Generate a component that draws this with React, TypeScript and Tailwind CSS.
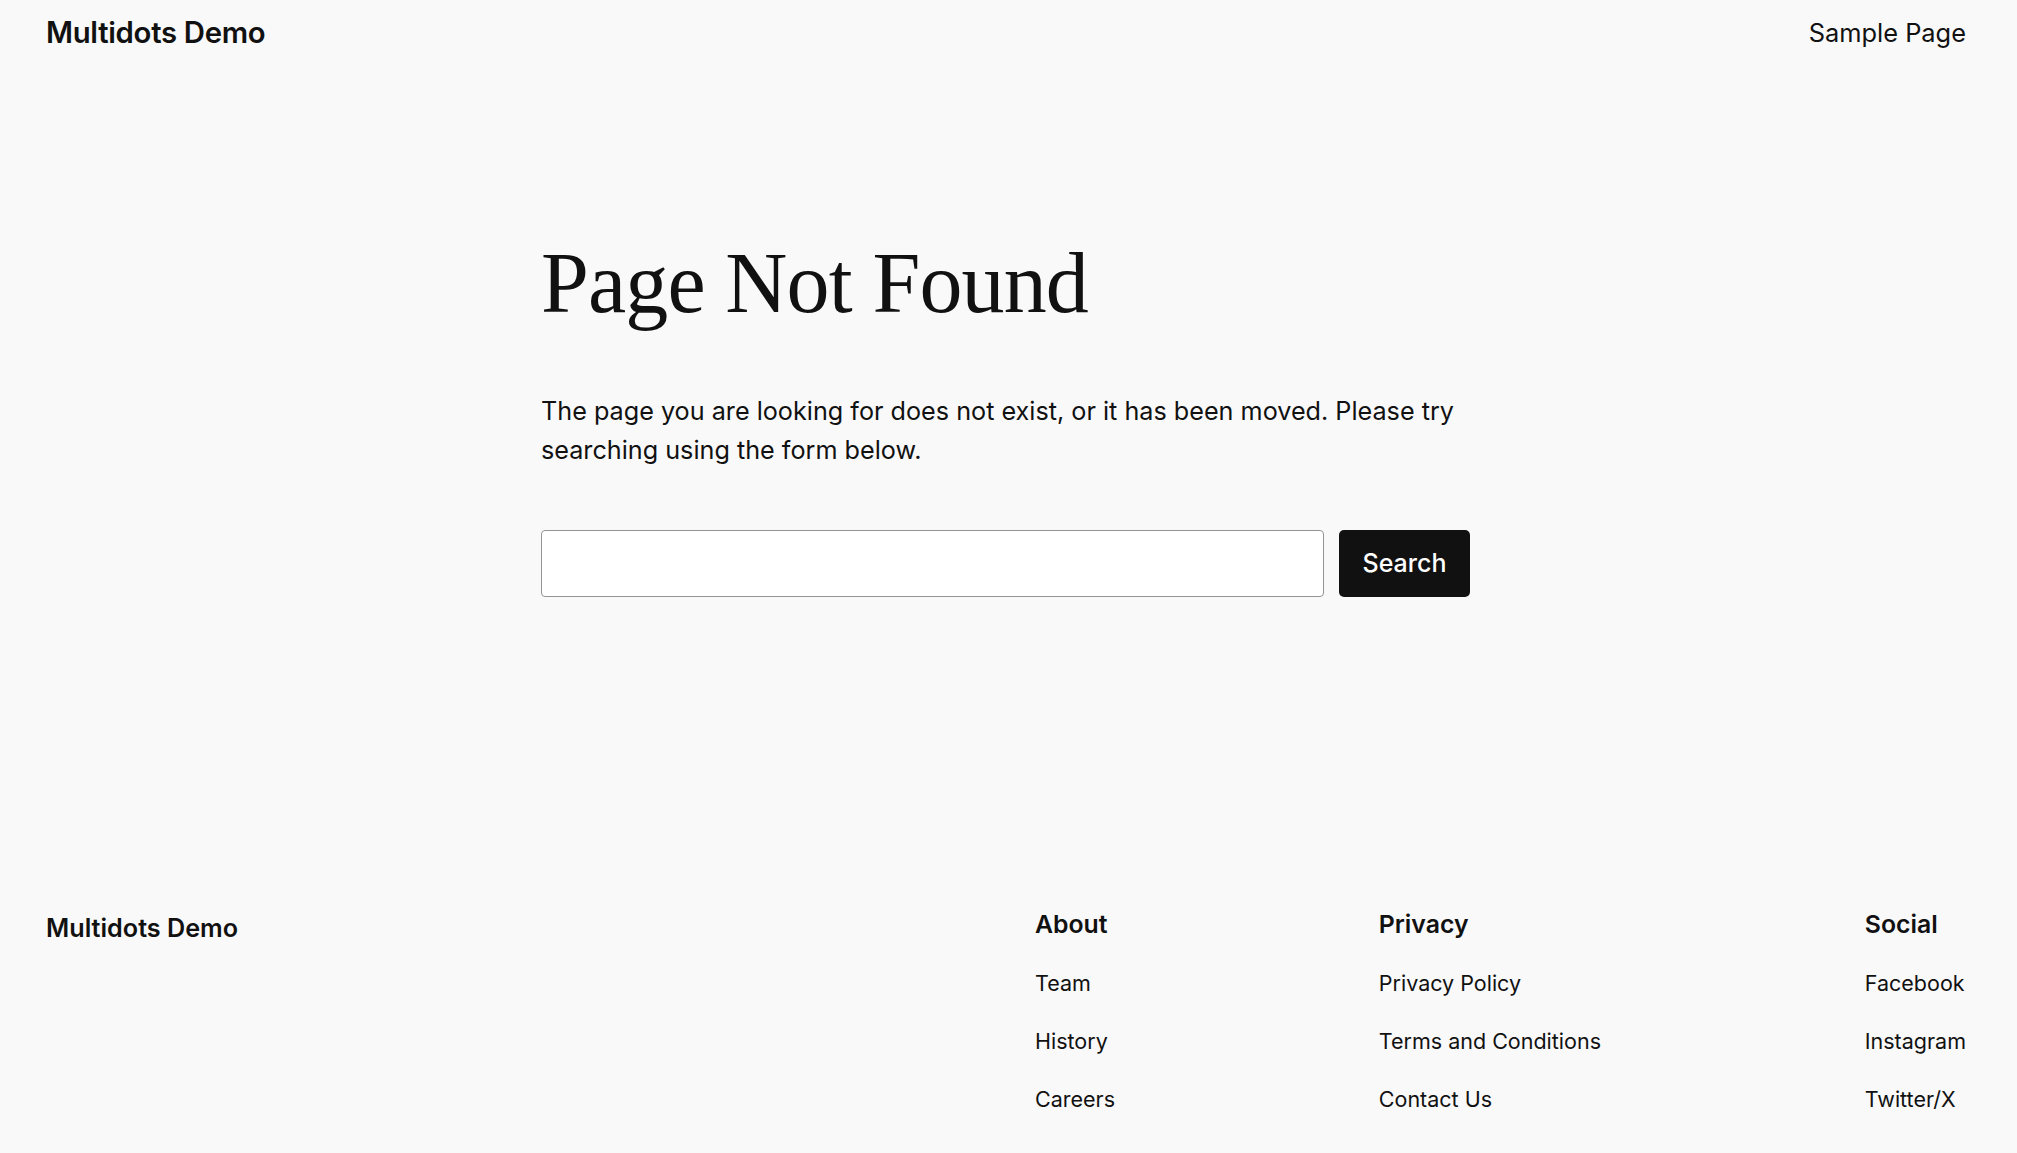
const footerCols = [
  { title: "About", links: ["Team", "History", "Careers"] },
  { title: "Privacy", links: ["Privacy Policy", "Terms and Conditions", "Contact Us"] },
  { title: "Social", links: ["Facebook", "Instagram", "Twitter/X"] },
];

export default function App() {
  return (
    <div className="flex min-h-screen flex-col bg-[#f9f9f9] font-['Inter',sans-serif] text-[#111111]">
      {/* Header */}
      <header className="flex h-[66px] items-center justify-between pl-[46px] pr-[51px]">
        <a href="#" className="text-[29.3px] font-semibold tracking-[-0.01em]">
          Multidots Demo
        </a>
        <nav>
          <a href="#" className="text-[25.4px]">
            Sample Page
          </a>
        </nav>
      </header>

      {/* 404 content */}
      <main className="mx-auto w-[935px] pt-[166px]">
        <h1 className="font-['Liberation_Serif',serif] text-[86px] leading-[1.2] tracking-[-0.01em]">
          Page Not Found
        </h1>
        <p className="mt-[57px] w-[929px] text-[25.2px] leading-[1.53]">
          The page you are looking for does not exist, or it has been moved. Please try searching using the form below.
        </p>
        <form className="mt-[61px] flex w-[929px] gap-[15px]" onSubmit={(e) => e.preventDefault()}>
          <input
            type="search"
            aria-label="Search"
            className="h-[67px] flex-1 rounded-[4px] border border-[#949494] bg-white px-4 text-[24px] outline-none"
          />
          <button
            type="submit"
            className="h-[67px] w-[131px] rounded-[5px] bg-[#111111] text-[25px] font-medium text-white"
          >
            Search
          </button>
        </form>
      </main>

      {/* Footer */}
      <footer className="mt-[313px] flex items-start pl-[46px] pr-[51px] pb-[24px]">
        <div className="flex-1 pt-[3px] text-[25.2px] font-semibold leading-[1.2]">Multidots Demo</div>
        <div className="flex w-[931px] justify-between">
          {footerCols.map((col) => (
            <div key={col.title}>
              <h2 className="text-[24.8px] font-semibold leading-[1.2]">{col.title}</h2>
              <ul className="mt-[27px] flex flex-col gap-[24.5px]">
                {col.links.map((l) => (
                  <li key={l}>
                    <a href="#" className="text-[21.5px] leading-[1.55]">
                      {l}
                    </a>
                  </li>
                ))}
              </ul>
            </div>
          ))}
        </div>
      </footer>
    </div>
  );
}
